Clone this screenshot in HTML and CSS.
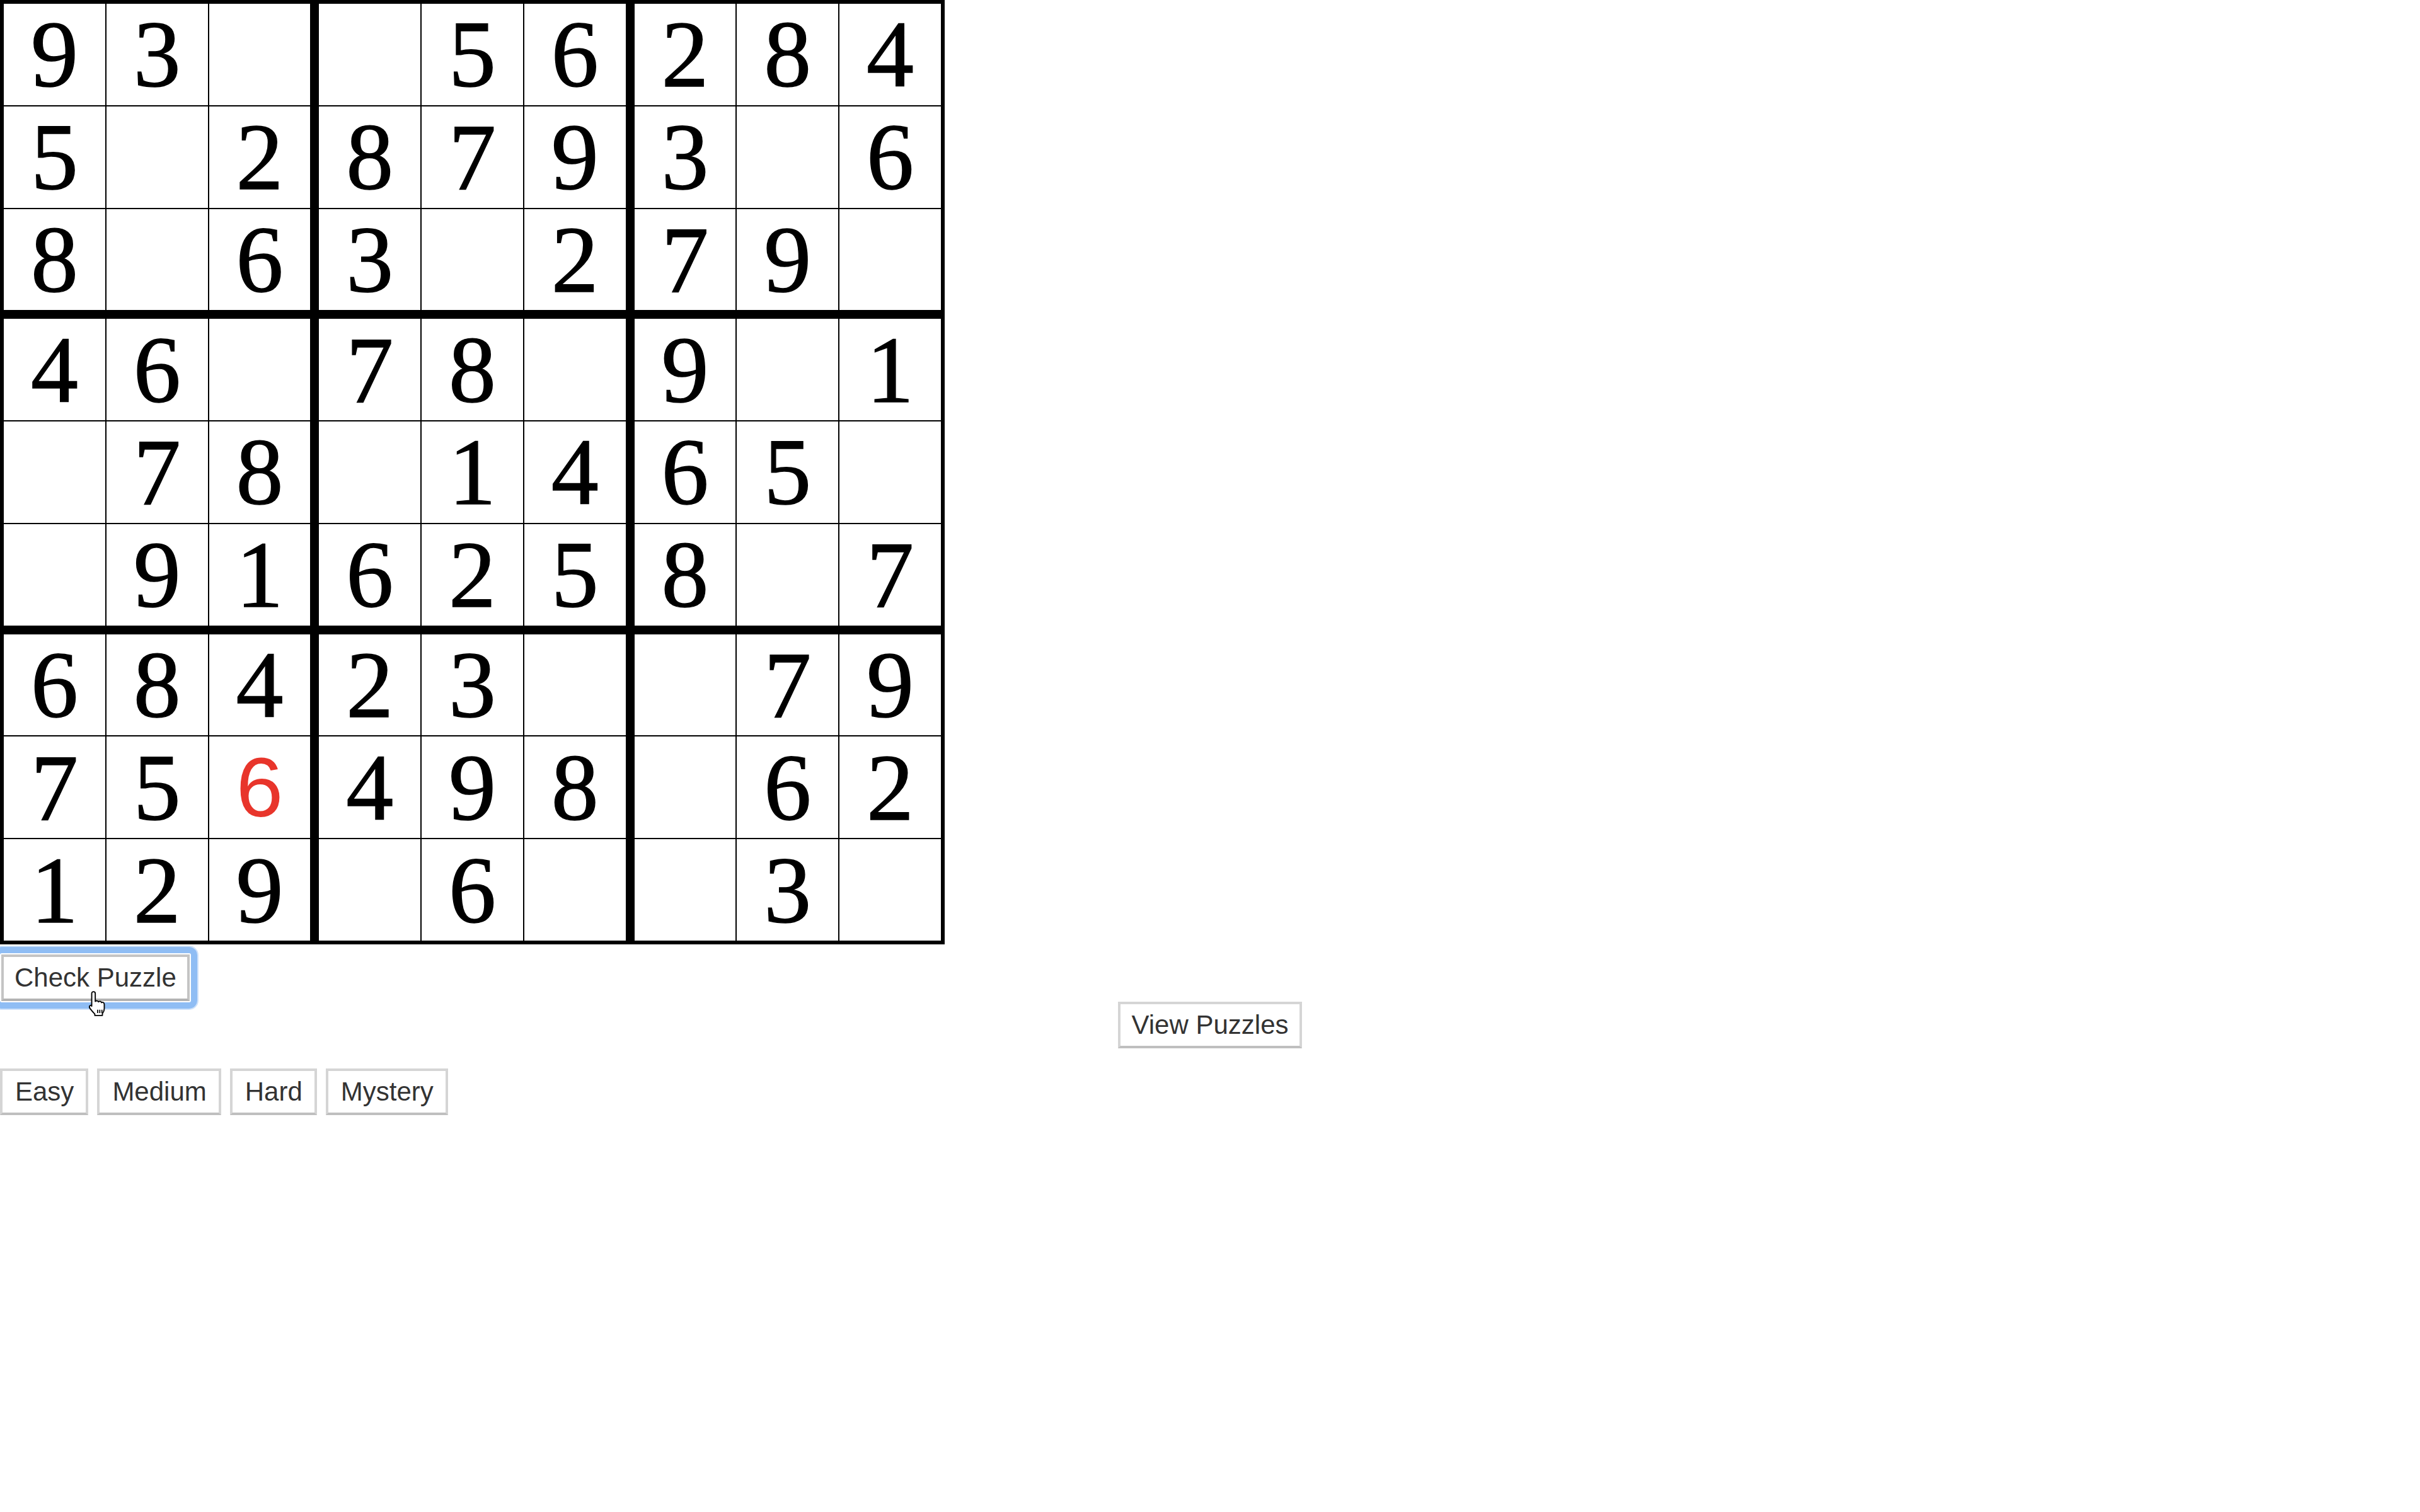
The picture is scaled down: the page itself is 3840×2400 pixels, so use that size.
FILE: index.html
```html
<!DOCTYPE html>
<html>
<head>
<meta charset="utf-8">
<title>Sudoku</title>
<link rel="stylesheet" href="styles.css">
</head>
<body>
<div class="board">
  <div class="box">
    <div class="cell">9</div><div class="cell">3</div><div class="cell"></div>
    <div class="cell">5</div><div class="cell"></div><div class="cell">2</div>
    <div class="cell">8</div><div class="cell"></div><div class="cell">6</div>
  </div>
  <div class="box">
    <div class="cell"></div><div class="cell">5</div><div class="cell">6</div>
    <div class="cell">8</div><div class="cell">7</div><div class="cell">9</div>
    <div class="cell">3</div><div class="cell"></div><div class="cell">2</div>
  </div>
  <div class="box">
    <div class="cell">2</div><div class="cell">8</div><div class="cell">4</div>
    <div class="cell">3</div><div class="cell"></div><div class="cell">6</div>
    <div class="cell">7</div><div class="cell">9</div><div class="cell"></div>
  </div>
  <div class="box">
    <div class="cell">4</div><div class="cell">6</div><div class="cell"></div>
    <div class="cell"></div><div class="cell">7</div><div class="cell">8</div>
    <div class="cell"></div><div class="cell">9</div><div class="cell">1</div>
  </div>
  <div class="box">
    <div class="cell">7</div><div class="cell">8</div><div class="cell"></div>
    <div class="cell"></div><div class="cell">1</div><div class="cell">4</div>
    <div class="cell">6</div><div class="cell">2</div><div class="cell">5</div>
  </div>
  <div class="box">
    <div class="cell">9</div><div class="cell"></div><div class="cell">1</div>
    <div class="cell">6</div><div class="cell">5</div><div class="cell"></div>
    <div class="cell">8</div><div class="cell"></div><div class="cell">7</div>
  </div>
  <div class="box">
    <div class="cell">6</div><div class="cell">8</div><div class="cell">4</div>
    <div class="cell">7</div><div class="cell">5</div><div class="cell cell-entry">6</div>
    <div class="cell">1</div><div class="cell">2</div><div class="cell">9</div>
  </div>
  <div class="box">
    <div class="cell">2</div><div class="cell">3</div><div class="cell"></div>
    <div class="cell">4</div><div class="cell">9</div><div class="cell">8</div>
    <div class="cell"></div><div class="cell">6</div><div class="cell"></div>
  </div>
  <div class="box">
    <div class="cell"></div><div class="cell">7</div><div class="cell">9</div>
    <div class="cell"></div><div class="cell">6</div><div class="cell">2</div>
    <div class="cell"></div><div class="cell">3</div><div class="cell"></div>
  </div>
</div>

<div class="check-row">
  <button class="btn btn-focus">Check Puzzle</button>
</div>

<div class="view-row">
  <button class="btn">View Puzzles</button>
</div>

<div class="level-row">
  <button class="btn btn-level">Easy</button>
  <button class="btn btn-level">Medium</button>
  <button class="btn btn-level">Hard</button>
  <button class="btn btn-level">Mystery</button>
</div>

<svg class="cursor" viewBox="0 0 17 22" width="32" height="42">
  <path d="M5.5 1 C6.4 1 7 1.6 7 2.5 V9.2 C7.4 8.4 9.4 8.4 9.7 9.6 C10.1 8.8 12 8.8 12.3 10.2 C12.8 9.6 14.6 9.8 14.6 11.6 V15.2 C14.6 17 13.8 18.4 13 19.4 V21 H6.6 V19.8 C5.6 18.8 4 17 2.6 15.2 C1.8 14.2 1.9 13 2.7 12.6 C3.4 12.2 4.1 12.6 4 13.2 V2.5 C4 1.6 4.6 1 5.5 1 Z" fill="#fff" stroke="#000" stroke-width="1" stroke-linejoin="round"/>
  <path d="M9 16.2 V19 M10.8 16.2 V19 M12.6 16.2 V19" stroke="#000" stroke-width="0.9"/>
</svg>
</body>
</html>
```

FILE: styles.css
```css
html, body {
  margin: 0;
  padding: 0;
  background: #fff;
}

body {
  font-family: "Liberation Serif", "Times New Roman", serif;
  position: relative;
  min-height: 2400px;
}

.board {
  width: 1499px;
  height: 1499px;
  box-sizing: border-box;
  padding: 6px;
  background: #000;
  display: grid;
  grid-template-columns: repeat(3, 1fr);
  grid-template-rows: repeat(3, 1fr);
  gap: 14px;
}

.box {
  display: grid;
  grid-template-columns: repeat(3, 1fr);
  grid-template-rows: repeat(3, 1fr);
  gap: 2px;
}

.cell {
  background: #fff;
  display: flex;
  align-items: center;
  justify-content: center;
  font-family: "Liberation Serif", "Times New Roman", serif;
  font-size: 150px;
  line-height: 1;
  color: #000;
  -webkit-text-stroke: 1.4px #000;
}

.cell-entry {
  font-family: "Liberation Sans", Arial, sans-serif;
  font-size: 134px;
  color: #e8352b;
  -webkit-text-stroke: 0;
}

.btn {
  font-family: "Liberation Sans", Arial, Helvetica, sans-serif;
  font-size: 42px;
  line-height: 48px;
  color: #333;
  background: #fff;
  border: 4px solid #d5d5d5;
  border-bottom-color: #bfbfbf;
  padding: 9px 17px;
  margin: 0;
  border-radius: 0;
  cursor: pointer;
}

.btn-level {
  padding: 9px 19px 9px 20px;
}

.check-row {
  margin-top: 16px;
  padding-left: 2px;
  display: flex;
}

.btn-focus {
  position: relative;
  border-color: #c4c4c4;
  border-bottom-color: #b3b3b3;
}

.btn-focus::after {
  content: "";
  position: absolute;
  inset: -16px;
  border: 10px solid #8fbdf4;
  border-radius: 13px;
  box-shadow: 0 0 0 2px #cfe2fa;
  pointer-events: none;
}

.view-row {
  margin-top: 1px;
  display: flex;
  justify-content: center;
}

.level-row {
  margin-top: 32px;
  display: flex;
  gap: 14px;
}

.cursor {
  position: absolute;
  left: 138px;
  top: 1572px;
}
```
